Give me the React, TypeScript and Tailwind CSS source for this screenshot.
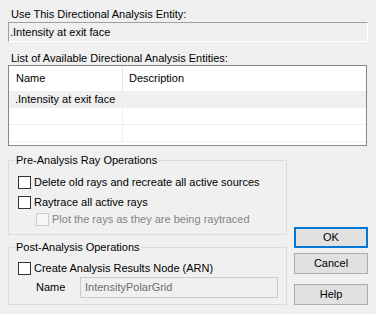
import React from 'react';

function CheckBox({ disabled = false }: { disabled?: boolean }) {
  return (
    <span
      className={`inline-block w-[13px] h-[13px] border shrink-0 ${
        disabled ? 'border-[#cccccc] bg-[#f7f7f7]' : 'border-[#333333] bg-white'
      }`}
    />
  );
}

function Group({
  title,
  className,
  children,
}: {
  title: string;
  className: string;
  children: React.ReactNode;
}) {
  return (
    <div className={`relative border border-[#dcdcdc] ${className}`}>
      <span className="absolute -top-[8px] left-[6px] px-[1px] bg-[#f0f0f0] leading-[14px]">
        {title}
      </span>
      {children}
    </div>
  );
}

export default function App() {
  const rows = ['.Intensity at exit face', '', ''];

  return (
    <div
      className="w-[376px] h-[314px] bg-[#f0f0f0] text-[11px] text-black pl-[8px] pt-[7px] overflow-hidden"
      style={{ fontFamily: '"Liberation Sans", Arial, sans-serif' }}
    >
      <div className="h-[14px] leading-[14px] pl-[3px]">Use This Directional Analysis Entity:</div>
      <div className="mt-[1px] w-[360px] h-[20px] border border-t-[#a0a0a0] border-l-[#a0a0a0] border-b-white border-r-white flex items-center pl-[1px]">
        .Intensity at exit face
      </div>

      <div className="mt-[9px] h-[14px] leading-[14px] pl-[3px]">
        List of Available Directional Analysis Entities:
      </div>
      <div className="w-[359px] border border-[#828790] bg-white">
        <div className="flex h-[25px]">
          <div className="w-[114px] border-r border-[#e5e5e5] pl-[7px] flex items-center">Name</div>
          <div className="flex-1 pl-[6px] flex items-center">Description</div>
        </div>
        {rows.map((r, i) => (
          <div
            key={i}
            className={`flex h-[17px] ${i === 0 ? 'bg-[#f0f0f0]' : 'border-b border-[#f0f0f0]'}`}
          >
            <div
              className={`w-[114px] pl-[6px] flex items-center ${
                i === 0 ? '' : 'border-r border-[#f0f0f0]'
              }`}
            >
              {r}
            </div>
            <div className="flex-1" />
          </div>
        ))}
        <div className="h-[3px]" />
      </div>

      <div className="mt-[14px] flex">
        <div className="w-[279px] flex flex-col">
          <Group title="Pre-Analysis Ray Operations" className="h-[75px] pt-[14px] pl-[9px]">
            <div className="flex items-center h-[15px] gap-[3px]">
              <CheckBox />
              <span>Delete old rays and recreate all active sources</span>
            </div>
            <div className="mt-[5px] flex items-center h-[15px] gap-[3px]">
              <CheckBox />
              <span>Raytrace all active rays</span>
            </div>
            <div className="mt-[2px] ml-[18px] flex items-center h-[15px] gap-[3px] text-[#838383]">
              <CheckBox disabled />
              <span>Plot the rays as they are being raytraced</span>
            </div>
          </Group>
          <Group title="Post-Analysis Operations" className="mt-[12px] h-[58px] pt-[13px] pl-[9px]">
            <div className="flex items-center h-[15px] gap-[3px]">
              <CheckBox />
              <span>Create Analysis Results Node (ARN)</span>
            </div>
            <div className="mt-[1px] flex items-center">
              <span className="w-[62px] shrink-0 pl-[18px]">Name</span>
              <div className="w-[198px] h-[21px] border border-[#cccccc] bg-[#f0f0f0] text-[#6d6d6d] flex items-center pl-[4px]">
                IntensityPolarGrid
              </div>
            </div>
          </Group>
        </div>

        <div className="ml-[7px] w-[74px] flex flex-col justify-end">
          <button className="h-[21px] border-2 border-[#0078d7] bg-[#e1e1e1]">OK</button>
          <button className="mt-[5px] h-[21px] border border-[#adadad] bg-[#e1e1e1]">Cancel</button>
          <button className="mt-[10px] h-[21px] border border-[#adadad] bg-[#e1e1e1]">Help</button>
        </div>
      </div>
    </div>
  );
}
